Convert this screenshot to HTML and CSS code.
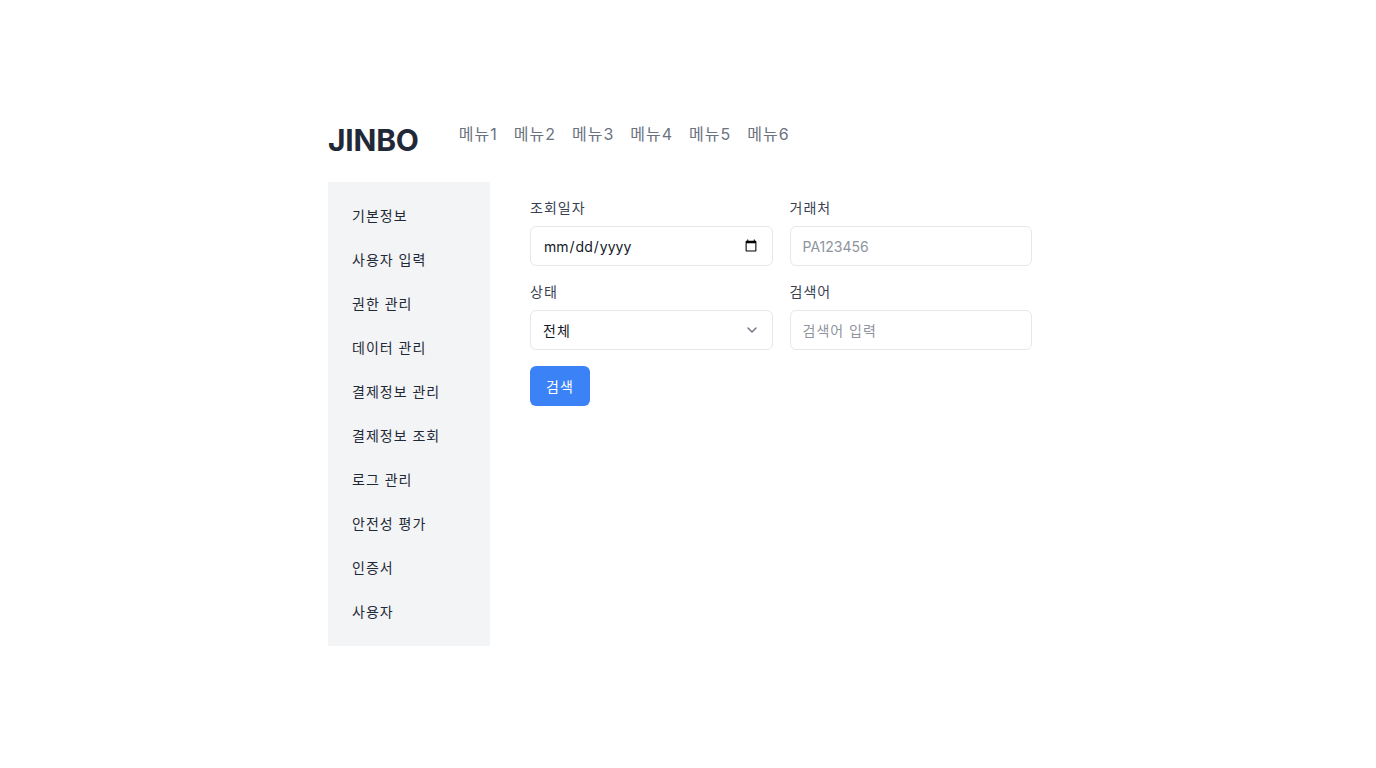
FILE: index.html
```html
<!DOCTYPE html>
<html lang="ko">
<head>
<meta charset="utf-8">
<title>JINBO</title>
<link rel="stylesheet" href="styles.css">
</head>
<body>
<div class="container">
  <header class="header">
    <h1 class="logo">JINBO</h1>
    <nav class="topnav">
      <a href="#">메뉴1</a>
      <a href="#">메뉴2</a>
      <a href="#">메뉴3</a>
      <a href="#">메뉴4</a>
      <a href="#">메뉴5</a>
      <a href="#">메뉴6</a>
    </nav>
  </header>
  <div class="layout">
    <aside class="sidebar">
      <ul>
        <li>기본정보</li>
        <li>사용자 입력</li>
        <li>권한 관리</li>
        <li>데이터 관리</li>
        <li>결제정보 관리</li>
        <li>결제정보 조회</li>
        <li>로그 관리</li>
        <li>안전성 평가</li>
        <li>인증서</li>
        <li>사용자</li>
      </ul>
    </aside>
    <main class="main">
      <form class="form">
        <div class="grid">
          <div class="field">
            <label>조회일자</label>
            <input type="date" class="control">
          </div>
          <div class="field">
            <label>거래처</label>
            <input type="text" class="control" placeholder="PA123456">
          </div>
          <div class="field">
            <label>상태</label>
            <div class="select-wrap">
              <select class="control select">
                <option>전체</option>
              </select>
              <svg class="chev" width="20" height="20" viewBox="0 0 20 20" fill="none" stroke="#6b7280" stroke-width="1.4" stroke-linecap="round" stroke-linejoin="round"><path d="M6 8l4 4 4-4"/></svg>
            </div>
          </div>
          <div class="field">
            <label>검색어</label>
            <input type="text" class="control ko" placeholder="검색어 입력">
          </div>
        </div>
        <button type="button" class="btn">검색</button>
      </form>
    </main>
  </div>
</div>
</body>
</html>
```
FILE: styles.css
```css
* { box-sizing: border-box; }
html, body { margin: 0; padding: 0; background: #fff; }
body {
  font-family: Inter, "Noto Sans CJK KR", sans-serif;
  color: #1f2937;
}
.container {
  width: 720px;
  margin: 0 auto;
  padding-top: 122px;
}
.header {
  display: flex;
  align-items: flex-start;
  margin-bottom: 24px;
}
.logo {
  margin: 0;
  font-size: 30px;
  line-height: 36px;
  font-weight: 700;
  color: #1f2937;
  letter-spacing: -0.2px;
}
.topnav {
  display: flex;
  gap: 16px;
  margin-left: 40px;
}
.topnav a {
  font-size: 16px;
  line-height: 24px;
  color: #6b7280;
  text-decoration: none;
  letter-spacing: 1px;
}
.layout {
  display: flex;
  align-items: flex-start;
}
.sidebar {
  width: 162px;
  background: #f3f4f6;
  padding: 12px;
}
.sidebar ul {
  list-style: none;
  margin: 0;
  padding: 0;
}
.sidebar li {
  padding: 12px;
  font-size: 14px;
  line-height: 20px;
  color: #1f2937;
  letter-spacing: 1px;
}
.main {
  padding: 16px 0 16px 40px;
}
.form { width: 502px; }
.grid {
  display: grid;
  grid-template-columns: 1fr 1fr;
  column-gap: 17px;
  row-gap: 16px;
}
.field label {
  display: block;
  font-size: 14px;
  line-height: 20px;
  color: #374151;
  margin-bottom: 8px;
  letter-spacing: 1px;
}
.control {
  display: block;
  width: 100%;
  height: 40px;
  border: 1px solid #e5e7eb;
  border-radius: 6px;
  padding: 0 12px;
  font-family: Inter, "Noto Sans CJK KR", sans-serif;
  font-size: 14px;
  color: #111827;
  background: #fff;
  outline: none;
}
.control::placeholder { color: #8e949e; }
.ko, .select { letter-spacing: 1px; }
.select-wrap { position: relative; }
.select {
  appearance: none;
  -webkit-appearance: none;
}
.chev {
  position: absolute;
  right: 11px;
  top: 10px;
  pointer-events: none;
}
.btn {
  margin-top: 16px;
  height: 40px;
  padding: 0 16px;
  border: none;
  border-radius: 6px;
  background: #3b82f6;
  color: #fff;
  font-family: Inter, "Noto Sans CJK KR", sans-serif;
  font-size: 14px;
  letter-spacing: 1px;
}
```
